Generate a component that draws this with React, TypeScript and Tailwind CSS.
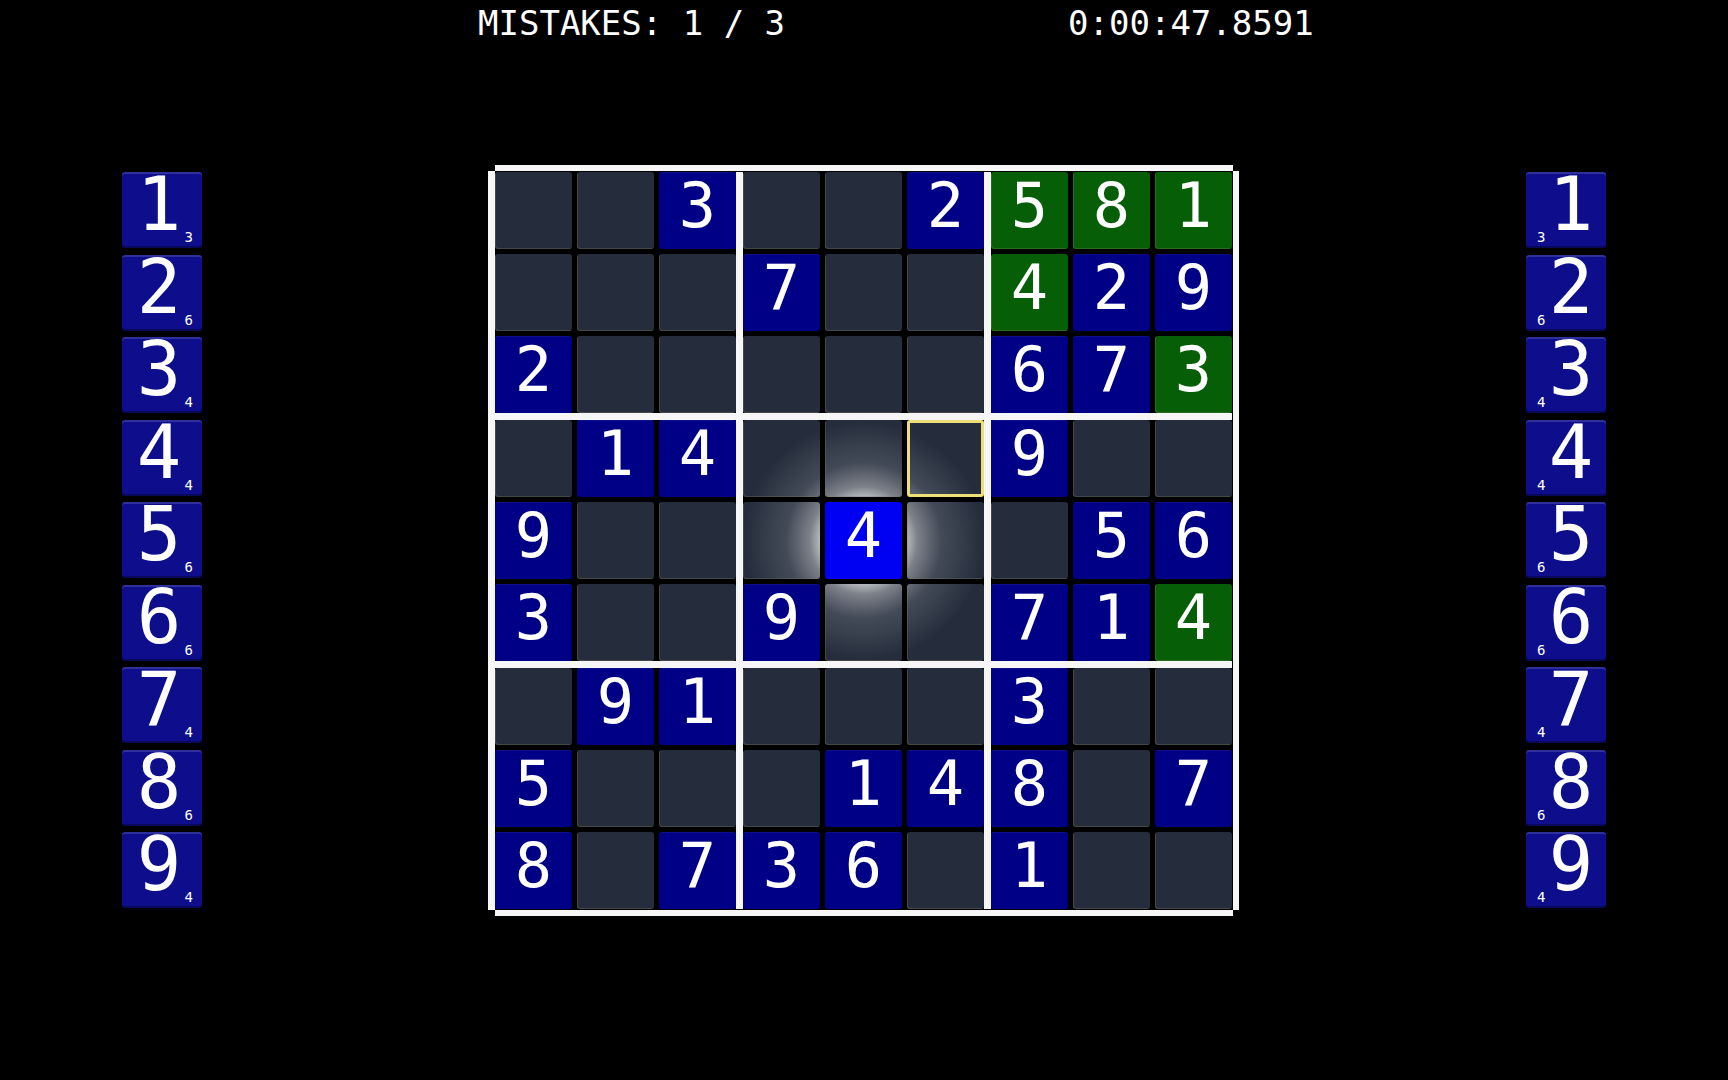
import React from 'react';

type Kind = 'empty' | 'blue' | 'green' | 'sel' | 'cursor';

// digits per row, '.' = empty
const values = [
	'..3..2581',
	'...7..429',
	'2.....673',
	'.14...9..',
	'9...4..56',
	'3..9..714',
	'.91...3..',
	'5...148.7',
	'8.736.1..',
];

// g = given (green), s = selected, y = cursor
const marks = [
	'......ggg',
	'......g..',
	'........g',
	'.....y...',
	'....s....',
	'........g',
	'.........',
	'.........',
	'.........',
];

const remaining = [3, 6, 4, 4, 6, 6, 4, 6, 4];

const kindClass: Record<Kind, string> = {
	empty: 'bg-[#252d3c] shadow-[inset_1px_-1px_0_rgba(130,120,95,0.35)]',
	blue: 'bg-[#000086] shadow-[inset_0_1px_0_rgba(255,255,255,0.06)]',
	green: 'bg-[#065e06] shadow-[inset_1px_-1px_0_rgba(160,150,110,0.25)]',
	sel: 'bg-[#0000f2]',
	cursor: 'bg-[#252d3c] border-[3px] border-[#eedf78]',
};

// light spill from the selected cell onto its neighbours
const glow: Record<string, string> = {
	'3-4': 'bg-[radial-gradient(circle_at_38.5px_120.5px,rgba(255,255,255,0.8)_38px,rgba(255,255,255,0.4)_54px,rgba(255,255,255,0.14)_78px,transparent_120px)]',
	'5-4': 'bg-[radial-gradient(circle_at_38.5px_-43.5px,rgba(255,255,255,0.8)_38px,rgba(255,255,255,0.4)_54px,rgba(255,255,255,0.14)_78px,transparent_120px)]',
	'4-3': 'bg-[radial-gradient(circle_at_120.5px_38.5px,rgba(255,255,255,0.8)_38px,rgba(255,255,255,0.4)_54px,rgba(255,255,255,0.14)_78px,transparent_120px)]',
	'4-5': 'bg-[radial-gradient(circle_at_-43.5px_38.5px,rgba(255,255,255,0.8)_38px,rgba(255,255,255,0.4)_54px,rgba(255,255,255,0.14)_78px,transparent_120px)]',
	'3-3': 'bg-[radial-gradient(circle_at_120.5px_120.5px,rgba(255,255,255,0.8)_38px,rgba(255,255,255,0.4)_54px,rgba(255,255,255,0.14)_78px,transparent_120px)]',
	'3-5': 'bg-[radial-gradient(circle_at_-43.5px_120.5px,rgba(255,255,255,0.8)_38px,rgba(255,255,255,0.4)_54px,rgba(255,255,255,0.14)_78px,transparent_120px)]',
	'5-5': 'bg-[radial-gradient(circle_at_-43.5px_-43.5px,rgba(255,255,255,0.8)_38px,rgba(255,255,255,0.4)_54px,rgba(255,255,255,0.14)_78px,transparent_120px)]',
};

function cellKind(r: number, c: number): Kind {
	const m = marks[r][c];
	if (m === 'g') return 'green';
	if (m === 's') return 'sel';
	if (m === 'y') return 'cursor';
	return values[r][c] === '.' ? 'empty' : 'blue';
}

function Cell({ r, c }: { r: number; c: number }) {
	const v = values[r][c];
	const kind = cellKind(r, c);
	return (
		<div
			className={`flex h-[77px] w-[77px] justify-center rounded-[3px] pt-[3px] text-[62px] leading-none text-white ${kindClass[kind]} ${glow[`${r}-${c}`] ?? ''}`}
		>
			{v !== '.' && <span>{v}</span>}
		</div>
	);
}

function Box({ br, bc }: { br: number; bc: number }) {
	const cells = [];
	for (let i = 0; i < 3; i++) {
		for (let j = 0; j < 3; j++) {
			cells.push(<Cell key={`${i}-${j}`} r={br * 3 + i} c={bc * 3 + j} />);
		}
	}
	return <div className="grid grid-cols-3 gap-[5px] bg-black">{cells}</div>;
}

function Board() {
	const boxes = [];
	for (let br = 0; br < 3; br++) {
		for (let bc = 0; bc < 3; bc++) {
			boxes.push(<Box key={`${br}-${bc}`} br={br} bc={bc} />);
		}
	}
	return (
		<div className="flex w-[751px] flex-col">
			<div className="ml-[7px] h-[6px] w-[738px] bg-[#f6f6f6]" />
			<div className="flex">
				<div className="w-[7px] bg-[#f6f6f6]" />
				<div className="my-[1px] grid grid-cols-3 gap-[7px] bg-[#f6f6f6]">{boxes}</div>
				<div className="ml-[1px] w-[6px] bg-[#f6f6f6]" />
			</div>
			<div className="ml-[7px] h-[6px] w-[738px] bg-[#f6f6f6]" />
		</div>
	);
}

function Tile({ n, side }: { n: number; side: 'left' | 'right' }) {
	return (
		<div className="relative flex h-[76px] w-[80px] justify-center rounded-[3px] bg-[#0e0e8c] shadow-[inset_0_2px_0_rgba(255,255,255,0.14),inset_0_-2px_0_rgba(0,0,0,0.35)]">
			<span className={`-mt-[5px] text-[74px] leading-none text-white ${side === 'left' ? 'pr-[6px]' : 'pl-[10px]'}`}>
				{n}
			</span>
			<span
				className={`absolute bottom-[4px] text-[14px] leading-none text-white ${side === 'left' ? 'right-[9px]' : 'left-[11px]'}`}
			>
				{remaining[n - 1]}
			</span>
		</div>
	);
}

function TileColumn({ side }: { side: 'left' | 'right' }) {
	return (
		<div className="mt-[7px] flex w-[80px] flex-col gap-[6.5px]">
			{[1, 2, 3, 4, 5, 6, 7, 8, 9].map((n) => (
				<Tile key={n} n={n} side={side} />
			))}
		</div>
	);
}

export default function App() {
	return (
		<div className="h-[1080px] w-[1728px] overflow-hidden bg-black font-[DejaVu_Sans_Mono,monospace] text-white">
			<header className="flex gap-[283px] pl-[478px] pt-[6px] text-[34px] leading-none">
				<span>MISTAKES: 1 / 3</span>
				<span>0:00:47.8591</span>
			</header>

			<main className="mt-[125px] flex items-start pl-[122px]">
				<TileColumn side="left" />
				<div className="ml-[286px]">
					<Board />
				</div>
				<div className="ml-[287px]">
					<TileColumn side="right" />
				</div>
			</main>
		</div>
	);
}
